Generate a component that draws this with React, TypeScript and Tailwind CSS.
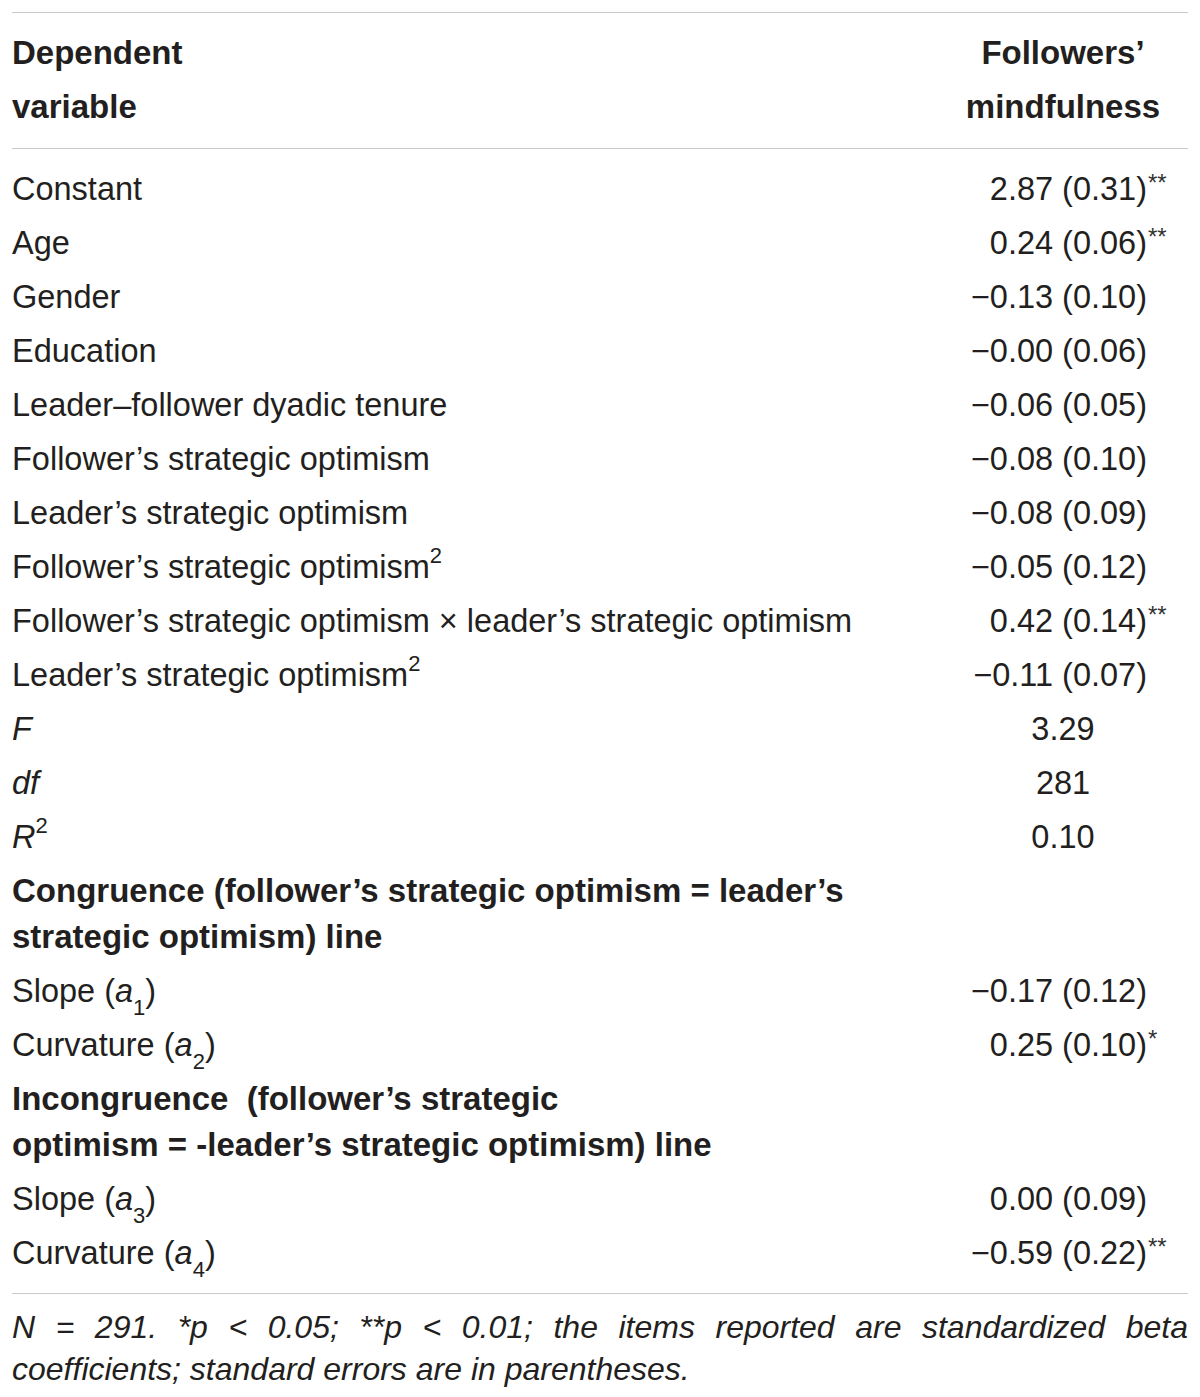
import React from 'react';

type Row = {
  label: React.ReactNode;
  value?: string;
  stars?: string;
  center?: boolean;
  bold?: boolean;
};

const Sup = ({ children }: { children: React.ReactNode }) => (
  <sup className="relative -top-[3px] align-super text-[22px] leading-none">{children}</sup>
);

const Sub = ({ children }: { children: React.ReactNode }) => (
  <sub className="align-sub text-[22px] leading-none">{children}</sub>
);

const rows: Row[] = [
  { label: 'Constant', value: '2.87 (0.31)', stars: '**' },
  { label: 'Age', value: '0.24 (0.06)', stars: '**' },
  { label: 'Gender', value: '−0.13 (0.10)' },
  { label: 'Education', value: '−0.00 (0.06)' },
  { label: 'Leader–follower dyadic tenure', value: '−0.06 (0.05)' },
  { label: 'Follower’s strategic optimism', value: '−0.08 (0.10)' },
  { label: 'Leader’s strategic optimism', value: '−0.08 (0.09)' },
  { label: <>Follower’s strategic optimism<Sup>2</Sup></>, value: '−0.05 (0.12)' },
  { label: 'Follower’s strategic optimism × leader’s strategic optimism', value: '0.42 (0.14)', stars: '**' },
  { label: <>Leader’s strategic optimism<Sup>2</Sup></>, value: '−0.11 (0.07)' },
  { label: <i>F</i>, value: '3.29', center: true },
  { label: <i>df</i>, value: '281', center: true },
  { label: <><i>R</i><Sup>2</Sup></>, value: '0.10', center: true },
  { label: <>Congruence (follower’s strategic optimism = leader’s<br />strategic optimism) line</>, bold: true },
  { label: <>Slope (<i>a</i><Sub>1</Sub>)</>, value: '−0.17 (0.12)' },
  { label: <>Curvature (<i>a</i><Sub>2</Sub>)</>, value: '0.25 (0.10)', stars: '*' },
  { label: <>Incongruence&nbsp; (follower’s strategic<br />optimism = -leader’s strategic optimism) line</>, bold: true },
  { label: <>Slope (<i>a</i><Sub>3</Sub>)</>, value: '0.00 (0.09)' },
  { label: <>Curvature (<i>a</i><Sub>4</Sub>)</>, value: '−0.59 (0.22)', stars: '**' },
];

const App = () => {
  return (
    <div
      className="w-[1200px] min-h-[1397px] bg-white px-3 pt-3 text-[#231f20]"
      style={{ fontFamily: '"Liberation Sans", Arial, Helvetica, sans-serif' }}
    >
      <div className="border-t border-[#c9c9c9]" />
      <div className="grid grid-cols-[1fr_250px] pt-[13px] pb-[14px] text-[33px] font-bold leading-[54px]">
        <div>
          Dependent
          <br />
          variable
        </div>
        <div className="text-center">
          Followers’
          <br />
          mindfulness
        </div>
      </div>
      <div className="border-t border-[#c9c9c9]" />
      <div className="pt-[13px] pb-[13px]">
        {rows.map((row, i) => (
          <div
            key={i}
            className={`grid grid-cols-[1fr_250px] py-1 leading-[46px] ${row.bold ? 'text-[33px] font-bold' : 'text-[32.5px] font-normal'}`}
          >
            <div>{row.label}</div>
            {row.value &&
              (row.center ? (
                <div className="text-center">{row.value}</div>
              ) : (
                <div className="flex justify-end">
                  <span>{row.value}</span>
                  <span className="w-[41px] pl-px text-[24px] leading-[34px] text-[#333]">{row.stars}</span>
                </div>
              ))}
          </div>
        ))}
      </div>
      <div className="border-t border-[#c9c9c9]" />
      <div className="pt-3 text-[32px] italic leading-[42px]">
        <p className="text-justify [text-align-last:justify]">
          N = 291. *p &lt; 0.05; **p &lt; 0.01; the items reported are standardized beta
        </p>
        <p>coefficients; standard errors are in parentheses.</p>
      </div>
    </div>
  );
};

export default App;
